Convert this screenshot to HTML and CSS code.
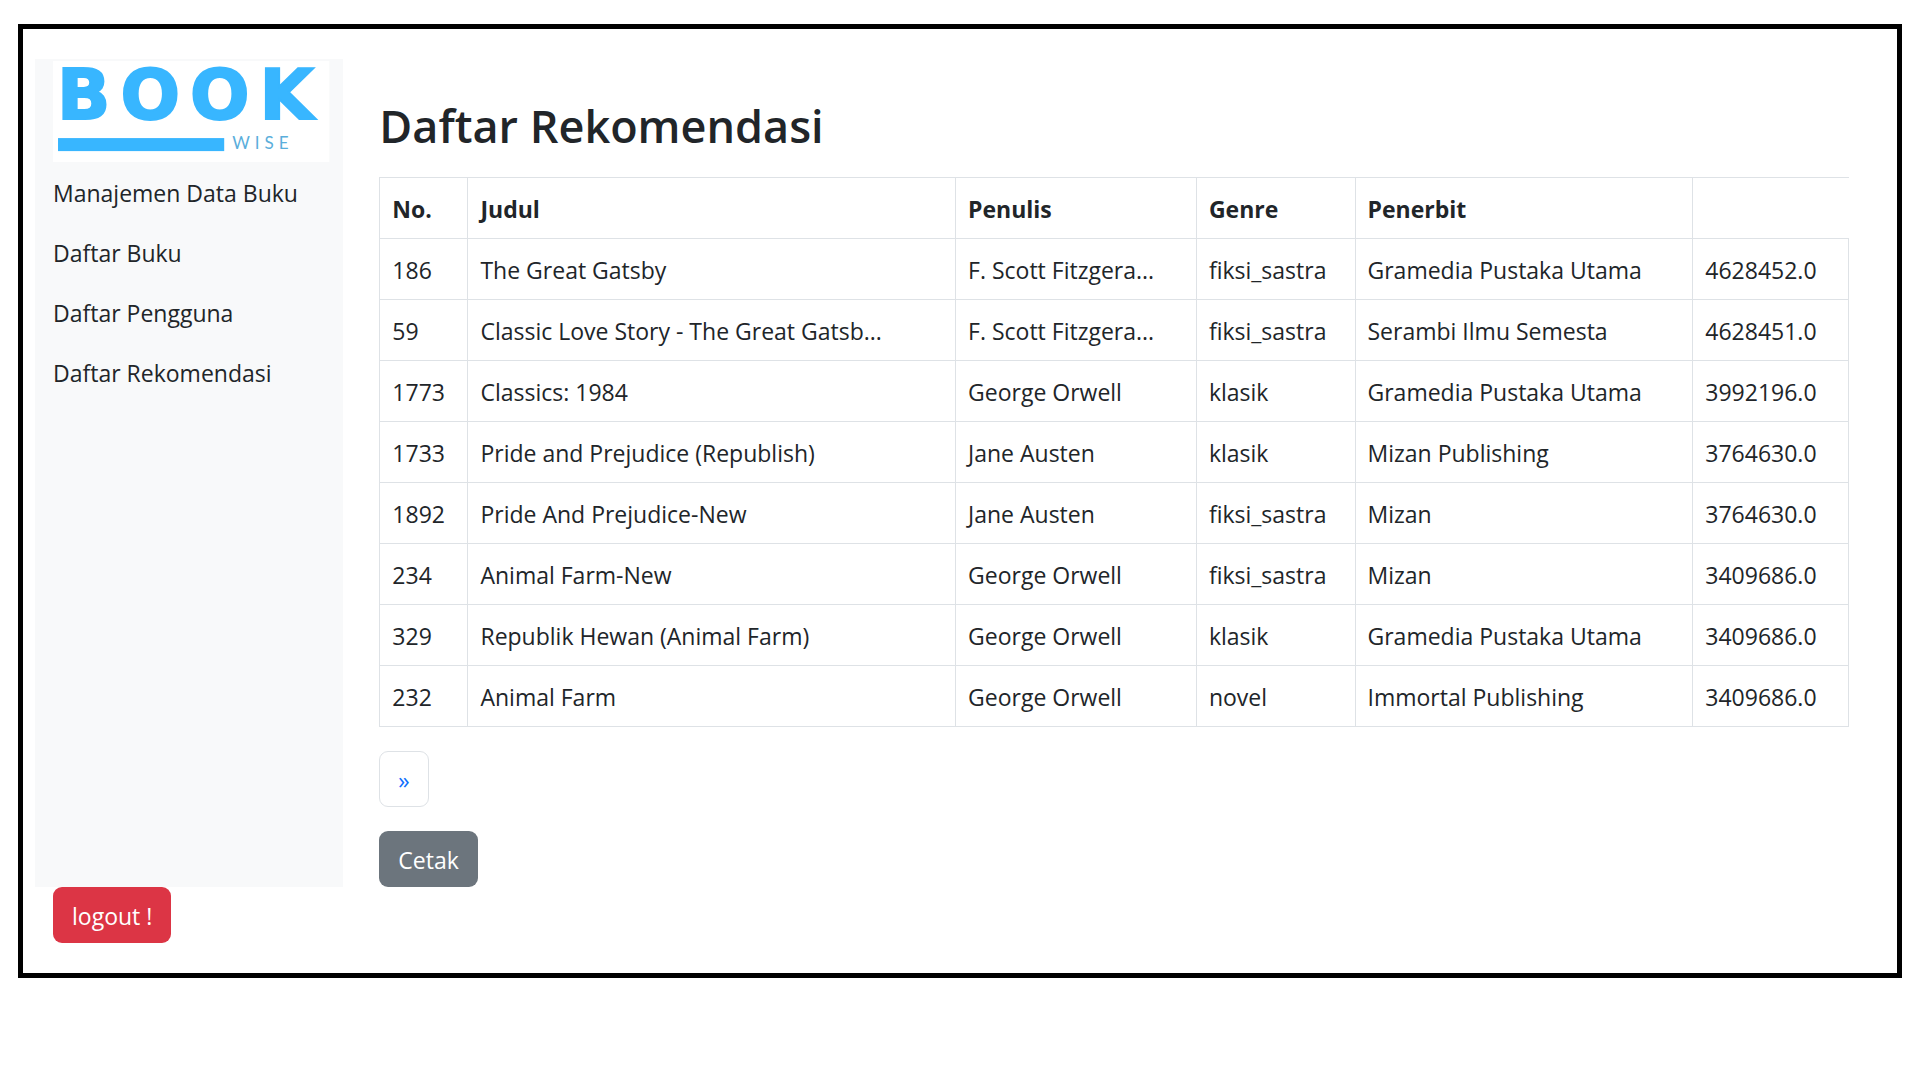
FILE: index.html
```html
<!DOCTYPE html>
<html lang="id">
<head>
  <meta charset="utf-8">
  <meta name="viewport" content="width=device-width, initial-scale=1">
  <title>Daftar Rekomendasi</title>
  <link rel="stylesheet" href="styles.css">
</head>
<body>
  <div class="frame">
    <div class="layout">
      <aside class="sidebar">
        <svg class="logo" viewBox="0 0 276 101" role="img" aria-label="Book Wise">
          <rect width="276" height="101" fill="#fff"/>
          <text class="logo-book" x="4" y="58">BOOK</text>
          <rect x="5" y="77" width="166" height="13" fill="#38b6ff"/>
          <text class="logo-wise" x="179" y="88">WISE</text>
        </svg>
        <nav class="menu">
          <a href="#">Manajemen Data Buku</a>
          <a href="#">Daftar Buku</a>
          <a href="#">Daftar Pengguna</a>
          <a href="#">Daftar Rekomendasi</a>
        </nav>
      </aside>
      <main class="content">
        <h1>Daftar Rekomendasi</h1>
        <table class="books">
          <colgroup>
            <col class="col-no"><col class="col-title"><col class="col-author"><col class="col-genre"><col class="col-publisher"><col>
          </colgroup>
          <thead>
            <tr><th>No.</th><th>Judul</th><th>Penulis</th><th>Genre</th><th>Penerbit</th></tr>
          </thead>
          <tbody>
            <tr><td>186</td><td>The Great Gatsby</td><td>F. Scott Fitzgera...</td><td>fiksi_sastra</td><td>Gramedia Pustaka Utama</td><td>4628452.0</td></tr>
            <tr><td>59</td><td>Classic Love Story - The Great Gatsb...</td><td>F. Scott Fitzgera...</td><td>fiksi_sastra</td><td>Serambi Ilmu Semesta</td><td>4628451.0</td></tr>
            <tr><td>1773</td><td>Classics: 1984</td><td>George Orwell</td><td>klasik</td><td>Gramedia Pustaka Utama</td><td>3992196.0</td></tr>
            <tr><td>1733</td><td>Pride and Prejudice (Republish)</td><td>Jane Austen</td><td>klasik</td><td>Mizan Publishing</td><td>3764630.0</td></tr>
            <tr><td>1892</td><td>Pride And Prejudice-New</td><td>Jane Austen</td><td>fiksi_sastra</td><td>Mizan</td><td>3764630.0</td></tr>
            <tr><td>234</td><td>Animal Farm-New</td><td>George Orwell</td><td>fiksi_sastra</td><td>Mizan</td><td>3409686.0</td></tr>
            <tr><td>329</td><td>Republik Hewan (Animal Farm)</td><td>George Orwell</td><td>klasik</td><td>Gramedia Pustaka Utama</td><td>3409686.0</td></tr>
            <tr><td>232</td><td>Animal Farm</td><td>George Orwell</td><td>novel</td><td>Immortal Publishing</td><td>3409686.0</td></tr>
          </tbody>
        </table>
        <nav class="pagination" aria-label="Halaman">
          <a class="page-link" href="#" aria-label="Berikutnya">»</a>
        </nav>
        <button class="btn btn-secondary" type="button">Cetak</button>
      </main>
    </div>
    <div class="footer">
      <button class="btn btn-danger" type="button">logout !</button>
    </div>
  </div>
</body>
</html>
```

FILE: styles.css
```css
*,
*::before,
*::after {
  box-sizing: border-box;
}

body {
  margin: 0;
  padding: 24px 18px;
  background: #fff;
  color: #212529;
  font-family: "Segoe UI", "Open Sans", "Noto Sans", sans-serif;
  font-size: 23px;
  line-height: 36px;
}

.frame {
  padding: 30px 12px;
  border: 5px solid #000;
}

.layout {
  display: grid;
  grid-template-columns: minmax(0, 1fr) minmax(0, 5fr);
}

.sidebar {
  padding: 2px 14px 0 18px;
  background: #f8f9fa;
}

.logo {
  display: block;
  width: 100%;
  height: auto;
  overflow: visible;
}

.logo-book {
  fill: #38b6ff;
  stroke: #38b6ff;
  stroke-width: 2px;
  font-family: "DejaVu Sans", sans-serif;
  font-size: 70px;
  font-weight: 700;
  letter-spacing: 10px;
}

.logo-wise {
  fill: #5aaedb;
  font-family: Lato, sans-serif;
  font-size: 17px;
  letter-spacing: 5px;
}

.menu a {
  display: block;
  padding: 13px 0 11px;
  color: inherit;
  text-decoration: none;
  white-space: nowrap;
}

.content {
  padding: 38px 36px 0;
}

h1 {
  margin: 0 0 22px;
  font-size: 45px;
  font-weight: 600;
  line-height: 58px;
}

.books {
  width: 100%;
  margin-bottom: 24px;
  border-collapse: collapse;
  table-layout: fixed;
  text-align: left;
}

.books th,
.books td {
  padding: 13px 12px 11px;
  border: 1px solid #dee2e6;
  white-space: nowrap;
}

.books thead tr {
  border-top: 1px solid #dee2e6;
}

.books th {
  font-weight: 700;
}

.col-no {
  width: 6%;
}

.col-title {
  width: 33.2%;
}

.col-author {
  width: 16.4%;
}

.col-genre {
  width: 10.8%;
}

.col-publisher {
  width: 23%;
}

.pagination {
  display: flex;
  margin-bottom: 24px;
}

.page-link {
  padding: 10px 18px 8px;
  border: 1px solid #dee2e6;
  border-radius: 9px;
  color: #0d6efd;
  text-decoration: none;
}

.btn {
  display: block;
  padding: 10px 18px 8px;
  border: 1px solid transparent;
  border-radius: 9px;
  color: #fff;
  font: inherit;
}

.btn-secondary {
  background: #6c757d;
}

.btn-danger {
  background: #dc3545;
}

.footer {
  padding-left: 18px;
}
```
